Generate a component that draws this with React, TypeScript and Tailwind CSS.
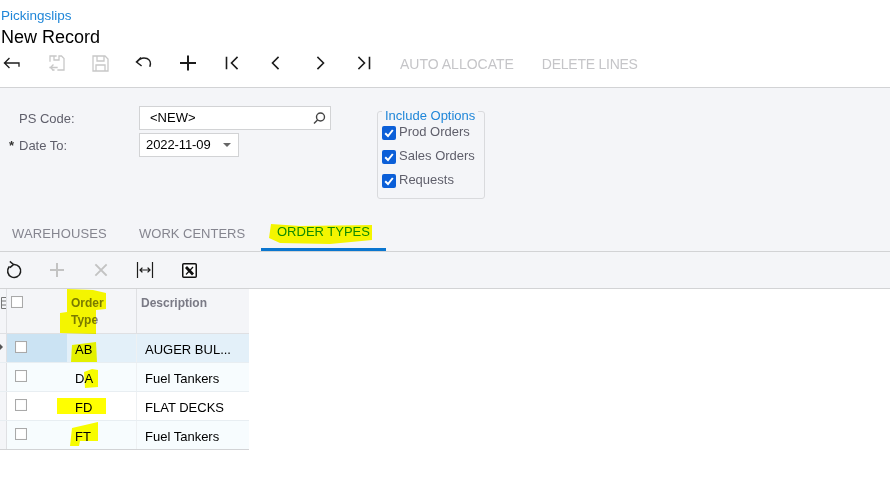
const Ico = ({ c = "#1c1c1c", sw = 1.5, children }: any) => (
  <span className="flex shrink-0 items-center justify-center">
    <svg width={22} height={22} viewBox="0 0 22 22" fill="none" stroke={c} strokeWidth={sw} strokeLinecap="square" strokeLinejoin="miter">{children}</svg>
  </span>
);

const Check = () => (
  <span className="flex h-[14px] w-[14px] shrink-0 items-center justify-center rounded-[2px] bg-[#0b5fd8]">
    <svg width="12" height="12" viewBox="0 0 12 12" fill="none" stroke="#fff" strokeWidth="2"><path d="M2.2 6.2 5 9l4.8-6" /></svg>
  </span>
);

const Box = () => <span className="block h-[12px] w-[12px] border border-[#a9a9a9] bg-white shadow-[inset_0_0_1px_#ddd]" />;

const Opt = ({ label }: { label: string }) => (
  <div className="flex h-[24px] gap-[3px] text-[13px] leading-[15px] text-[#5f5f6b]">
    <span className="pt-[2px]"><Check /></span>
    {label}
  </div>
);

const rows = [
  { t: "AB", d: "AUGER BUL...", bg: "bg-[#e3f0f9]", sel: true },
  { t: "DA", d: "Fuel Tankers", bg: "bg-[#f7fcfe]" },
  { t: "FD", d: "FLAT DECKS", bg: "bg-white" },
  { t: "FT", d: "Fuel Tankers", bg: "bg-[#f7fcfe]" },
];

export default function App() {
  return (
    <div className="relative h-[494px] w-[890px] overflow-hidden bg-white font-['Liberation_Sans',Arial,sans-serif]">
      <header className="h-[88px] border-b border-[#d2d3d5] pl-[1px]">
        <div className="pt-[8px] text-[13.500px] leading-[15px] text-[#1f86d8]">Pickingslips</div>
        <div className="mt-[3px] text-[18px] leading-[22px] text-black">New Record</div>
        <div className="mt-[4px] flex h-[22px] items-center">
          <div className="flex w-[22px] justify-center"><Ico sw={1.300}><path d="M8 6.500 3.500 11 8 15.500M3.500 11h14.500v3" /></Ico></div>
          <div className="ml-[22px] flex w-[22px] justify-center"><Ico c="#c8c8c8" sw={1.300}><path d="M11 4H5v5M14 4h2.500L19 6.500V18h-6M14 4v4H9V4M5 15.500h7M8 13l-2.500 2.500L8 18" /><path d="M9 18H8" /></Ico></div>
          <div className="ml-[22px] flex w-[22px] justify-center"><Ico c="#c8c8c8" sw={1.300}><path d="M4 4h12l3 3v12H4zM8 4v5h7V4M7 19v-6h9v6" /></Ico></div>
          <div className="ml-[22px] flex w-[22px] justify-center"><Ico sw={1.500}><path d="M7.500 6 3.500 10l4.500 3.500M4 10c3-4 7-4.500 10-3.500 3 1.200 4 4.500 3 7.500" /></Ico></div>
          <div className="ml-[22px] flex w-[22px] justify-center"><Ico sw={2}><path d="M11 4.500v13M4 11h14" /></Ico></div>
          <div className="ml-[22px] flex w-[22px] justify-center"><Ico sw={1.600}><path d="M5.500 5.500v11M16 5.500 10.500 11l5.500 5.500" /></Ico></div>
          <div className="ml-[22px] flex w-[22px] justify-center"><Ico sw={1.600}><path d="M13 5.500l-5.500 5.500 5.500 5.500" /></Ico></div>
          <div className="ml-[22px] flex w-[22px] justify-center"><Ico sw={1.600}><path d="M9 5.500l5.500 5.500L9 16.500" /></Ico></div>
          <div className="ml-[22px] flex w-[22px] justify-center"><Ico sw={1.600}><path d="M6 5.500l5.500 5.500L6 16.500M16.500 5.500v11" /></Ico></div>
          <span className="ml-[25px] pt-[1px] text-[14px] leading-[22px] text-[#c5c5c8]">AUTO ALLOCATE</span>
          <span className="ml-[28px] pt-[1px] text-[14px] leading-[22px] tracking-[-0.25px] text-[#c5c5c8]">DELETE LINES</span>
        </div>
      </header>

      <section className="h-[164px] border-b border-[#d2d3d5] bg-[#f4f5f8]">
        <div className="flex h-[124px]">
          <div className="w-[139px] shrink-0 pt-[18px] text-[13px]">
            <div className="flex h-[24px] items-center pl-[19px] pt-[1px] text-[#5f5f6b]">PS Code:</div>
            <div className="mt-[3px] flex h-[24px] items-center pl-[9px] pt-[1px] text-[#5f5f6b]"><span className="w-[10px] font-bold text-[#333]">*</span>Date To:</div>
          </div>
          <div className="w-[238px] shrink-0 pt-[18px]">
            <div className="flex h-[24px] w-[192px] items-center justify-between border border-[#d2d3d5] bg-white pl-[10px] pr-[3px] text-[13px] text-black">
              <span>&lt;NEW&gt;</span>
              <svg width="15" height="15" viewBox="0 0 15 15" fill="none" stroke="#444" strokeWidth="1.4"><circle cx="8.500" cy="6" r="4" /><path d="M5.500 9 2 12.500" /></svg>
            </div>
            <div className="mt-[3px] flex h-[24px] w-[100px] items-center justify-between border border-[#d2d3d5] bg-white pl-[6px] pr-[7px] text-[13px] tracking-[-0.1px] text-black">
              <span>2022-11-09</span>
              <span className="h-0 w-0 border-x-[4px] border-t-[4px] border-x-transparent border-t-[#666]" />
            </div>
          </div>
          <div className="relative mt-[23px] h-[88px] w-[108px] rounded-[3px] border border-[#d9dadd] pl-[4px] pt-[12px]">
            <span className="absolute left-[4px] top-[-4px] bg-[#f4f5f8] px-[3px] text-[13px] leading-[15px] text-[#1f86d8]">Include Options</span>
            <Opt label="Prod Orders" />
            <Opt label="Sales Orders" />
            <Opt label="Requests" />
          </div>
        </div>
        <nav className="flex h-[39px] items-stretch text-[13px] text-[#85858f]">
          <div className="flex w-[139px] items-center pl-[12px] pt-[4px] tracking-[0.15px]">WAREHOUSES</div>
          <div className="flex w-[122px] items-center pt-[4px]">WORK CENTERS</div>
          <div className="flex w-[125px] items-center border-b-[3px] border-[#0a76cf] pl-[16px] pt-[4px] text-[#118a11]">ORDER TYPES</div>
        </nav>
      </section>

      <div className="flex h-[37px] items-center border-b border-[#d2d3d5] bg-[#f4f5f8]">
        <div className="flex w-[27px] justify-center"><Ico sw={1.600}><path d="M11 5.500a6.500 6.500 0 1 1-5 2.500M7.500 3 10.500 5.500l-3 2.500" /></Ico></div>
        <div className="ml-[16px] flex w-[28px] justify-center"><Ico c="#c3c3c3" sw={2}><path d="M11 5v12M5 11h12" /></Ico></div>
        <div className="ml-[16px] flex w-[28px] justify-center"><Ico c="#c3c3c3" sw={1.800}><path d="M6 6l10 10M16 6 6 16" /></Ico></div>
        <div className="ml-[16px] flex w-[28px] justify-center"><Ico sw={1.200}><path d="M3.500 3.500v15M18.500 3.500v15M6 11h10M8 9l-2 2 2 2M14 9l2 2-2 2" /></Ico></div>
        <div className="ml-[16px] flex w-[28px] justify-center"><svg width="15" height="15" viewBox="0 0 15 15"><rect x="0.750" y="0.750" width="13.500" height="13.500" rx="1" fill="#fff" stroke="#111" strokeWidth="1.500" /><path d="M4 4l7 7.500" stroke="#111" strokeWidth="2.800" /><path d="M11 4l-7 7.500" stroke="#111" strokeWidth="1.200" /></svg></div>
      </div>

      <div className="w-[249px] border-b border-[#d2d3d5] text-[13px]">
        <div className="flex h-[45px] border-b border-[#dfe0e3] bg-[#f4f5f8] text-[12px] font-bold leading-[17px] text-[#7a7a85]">
          <div className="flex w-[7px] justify-end border-r border-[#dfe0e3] pt-[8px]">
            <svg width="5" height="12" viewBox="0 0 5 12" fill="none" stroke="#777" strokeWidth="1"><path d="M5 .5H.5v11H5M0 4h5M0 8h5" /></svg>
          </div>
          <div className="w-[60px] pl-[4px] pt-[7px]"><Box /></div>
          <div className="w-[70px] border-r border-[#dfe0e3] pl-[4px] pt-[6px]">Order<br />Type</div>
          <div className="flex-1 pl-[4px] pt-[6px]">Description</div>
        </div>
        {rows.map((r, i) => (
          <div key={r.t} className={(i === 3 ? "h-[28px] " : "h-[29px] border-b border-[#e8eef2] ") + "flex " + r.bg}>
            <div className="relative w-[7px] border-r border-[#dfe0e3] bg-[#f4f5f8]">
              {r.sel && <span className="absolute left-0 top-[10px] h-0 w-0 border-y-[3px] border-l-[3px] border-y-transparent border-l-[#555]" />}
            </div>
            <div className={"flex w-[60px] items-start pl-[8px] pt-[7px] " + (r.sel ? "bg-[#cbe3f3]" : "")}><Box /></div>
            <div className="flex w-[70px] items-center border-r border-[#eef1f3] pl-[8px] pt-[4px] text-black">{r.t}</div>
            <div className="flex flex-1 items-center pl-[8px] pt-[4px] text-black">{r.d}</div>
          </div>
        ))}
      </div>

      {/* hand-drawn highlighter strokes lying over the page */}
      <svg className="pointer-events-none absolute left-0 top-0 mix-blend-multiply" width="890" height="494" viewBox="0 0 890 494" fill="#ffff00">
        <path d="M271 224 300 226 372 225 372 240 330 244 280 243 269 238Z" />
        <path d="M67 289 93 290 106 293 106 309 96 310 96 334 60 333 60 313 67 312Z" />
        <path d="M72 345 96 342 97 362 71 362Z" />
        <path d="M84 372 92 369 98 370 98 387 85 388Z" />
        <path d="M57 398 106 398 106 414 57 414Z" />
        <path d="M72 428 98 422 98 441 80 441 79 446 70 446Z" />
      </svg>
    </div>
  );
}
